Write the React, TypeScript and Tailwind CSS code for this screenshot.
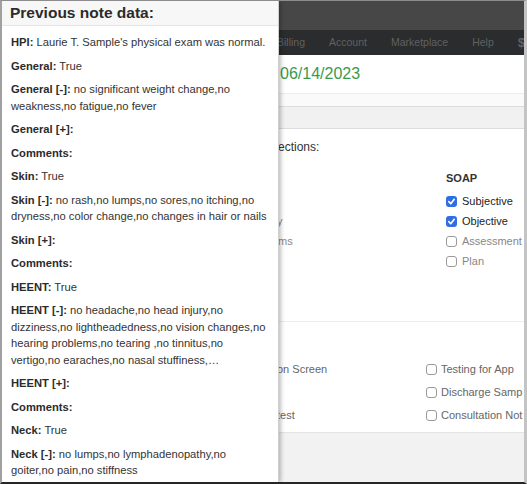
import React from 'react';

const notes: { label: string; value?: string }[] = [
  { label: 'HPI:', value: "Laurie T. Sample's physical exam was normal." },
  { label: 'General:', value: 'True' },
  { label: 'General [-]:', value: 'no significant weight change,no weakness,no fatigue,no fever' },
  { label: 'General [+]:' },
  { label: 'Comments:' },
  { label: 'Skin:', value: 'True' },
  { label: 'Skin [-]:', value: 'no rash,no lumps,no sores,no itching,no dryness,no color change,no changes in hair or nails' },
  { label: 'Skin [+]:' },
  { label: 'Comments:' },
  { label: 'HEENT:', value: 'True' },
  {
    label: 'HEENT [-]:',
    value:
      'no headache,no head injury,no dizziness,no lightheadedness,no vision changes,no hearing problems,no tearing ,no tinnitus,no vertigo,no earaches,no nasal stuffiness,…',
  },
  { label: 'HEENT [+]:' },
  { label: 'Comments:' },
  { label: 'Neck:', value: 'True' },
  { label: 'Neck [-]:', value: 'no lumps,no lymphadenopathy,no goiter,no pain,no stiffness' },
];

const soap: [string, boolean][] = [
  ['Subjective', true],
  ['Objective', true],
  ['Assessment', false],
  ['Plan', false],
];

const Box = ({ checked }: { checked?: boolean }) =>
  checked ? (
    <span className="w-[11px] h-[11px] rounded-[3px] bg-[#2f6fe3] flex items-center justify-center shrink-0">
      <svg width="9" height="9" viewBox="0 0 10 10">
        <path d="M2 5.2 L4.2 7.4 L8 2.6" fill="none" stroke="white" strokeWidth="1.8" strokeLinecap="round" strokeLinejoin="round" />
      </svg>
    </span>
  ) : (
    <span className="w-[11px] h-[11px] rounded-[3px] border border-[#9a9a9a] bg-white shrink-0" />
  );

export default function App() {
  return (
    <div
      className="relative w-[527px] h-[484px] overflow-hidden bg-white border-t border-l-2 border-r-[3px] border-b-2 border-t-[#8c8c8c] border-l-[#a0a0a0] border-r-[#c4c4c4] border-b-[#262626]"
      style={{ fontFamily: '"Liberation Sans", Arial, sans-serif' }}
    >
      {/* page behind the popover */}
      <div className="flex flex-col h-full">
        <div className="h-[29px] bg-[#474747] shrink-0" />
        <nav className="h-[25px] bg-[#2a2c2e] shrink-0 flex items-center pl-[275px] text-[10.5px] text-[#616161] gap-[24px] whitespace-nowrap">
          <span>Billing</span>
          <span>Account</span>
          <span>Marketplace</span>
          <span>Help</span>
          <span className="font-bold text-[13px]">$</span>
        </nav>
        <div className="h-[38px] shrink-0 flex items-center pl-[278px] text-[16px] text-[#3b9a4a]">06/14/2023</div>
        <div className="h-[13px] shrink-0 bg-[#fafafa] border-t border-[#ececec]" />
        <div className="h-[23px] shrink-0 bg-[#f1f1f1] border-y border-[#dcdcdc]" />
        <div className="shrink-0 h-[193px] border-b border-[#ededed] pl-[276px] pt-[10px] text-[12px] text-[#333]">
          <div className="leading-[16px]">ections:</div>
          <div className="flex mt-[15px]">
            <div className="w-[168px] text-[#888] text-[11px]">
              <div className="h-[21px]" />
              <div className="h-[20px] leading-[20px]" />
              <div className="h-[20px] leading-[20px] -ml-[1px]">y</div>
              <div className="h-[20px] leading-[20px]">ms</div>
            </div>
            <div className="text-[11px]">
              <div className="leading-[16px] font-bold text-[#333]">SOAP</div>
              <div className="mt-[5px]">
                {soap.map(([name, on]) => (
                  <div key={name} className="h-[20px] flex items-center gap-[5px]">
                    <Box checked={on} />
                    <span className={on ? 'text-[#222]' : 'text-[#888]'}>{name}</span>
                  </div>
                ))}
              </div>
            </div>
          </div>
        </div>
        <div className="shrink-0 h-[110px] overflow-hidden pl-[275px] pt-[36px] text-[11px] text-[#666] flex">
          <div className="w-[149px]">
            <div className="h-[23px] leading-[23px]">on Screen</div>
            <div className="h-[23px]" />
            <div className="h-[23px] leading-[23px]">test</div>
          </div>
          <div className="whitespace-nowrap">
            {['Testing for App', 'Discharge Samp', 'Consultation Not', ''].map((t, i) => (
              <div key={i} className="h-[23px] flex items-center gap-[4px]">
                <Box />
                <span>{t}</span>
              </div>
            ))}
          </div>
        </div>
        <div className="flex-1 bg-[#f2f2f2] border-t border-[#e4e4e4]" />
      </div>

      {/* previous note popover */}
      <div className="absolute left-0 top-0 w-[277px] h-full bg-white border-r border-[#cfcfcf] shadow-[2px_0_4px_rgba(0,0,0,0.25)] text-[#333]">
        <div className="h-[25px] bg-[#f7f7f7] border-b border-[#e6e6e6] flex items-center px-[8px]">
          <h2 className="text-[15.5px] font-bold text-[#2b2b2b]">Previous note data:</h2>
        </div>
        <div className="px-[9px] pt-[8px] text-[11.2px] leading-[16.5px]">
          {notes.map((n, i) => (
            <p key={i} className="mb-[7px]">
              <b className="text-[#2b2b2b]">{n.label}</b>
              {n.value ? ' ' + n.value : ''}
            </p>
          ))}
        </div>
      </div>
    </div>
  );
}
